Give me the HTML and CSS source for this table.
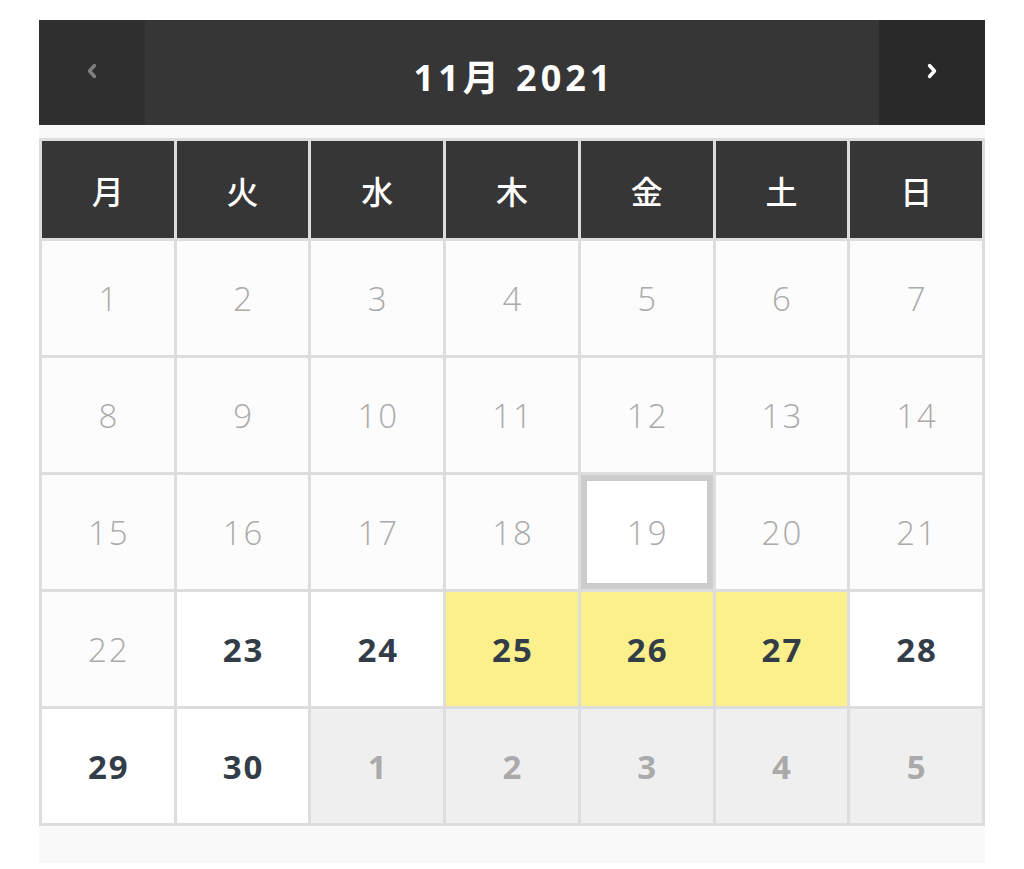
FILE: index.html
```html
<!DOCTYPE html>
<html lang="ja">
<head>
<meta charset="utf-8">
<link rel="stylesheet" href="styles.css">
</head>
<body>
<div class="cal">
  <div class="cal-head">
    <div class="nav nav-prev">
      <svg width="14" height="18" viewBox="0 0 14 18"><path d="M9.5 3.5 L4.5 9 L9.5 14.5" fill="none" stroke="#808080" stroke-width="3.4" stroke-linecap="round" stroke-linejoin="round"/></svg>
    </div>
    <div class="title">11月 2021</div>
    <div class="nav nav-next">
      <svg width="14" height="18" viewBox="0 0 14 18"><path d="M4.5 3.5 L9.5 9 L4.5 14.5" fill="none" stroke="#ffffff" stroke-width="3.4" stroke-linecap="round" stroke-linejoin="round"/></svg>
    </div>
  </div>
  <div class="cal-body">
    <div class="grid">
      <div class="wd">月</div><div class="wd">火</div><div class="wd">水</div><div class="wd">木</div><div class="wd">金</div><div class="wd">土</div><div class="wd">日</div>
      <div class="d past">1</div><div class="d past">2</div><div class="d past">3</div><div class="d past">4</div><div class="d past">5</div><div class="d past">6</div><div class="d past">7</div>
      <div class="d past">8</div><div class="d past">9</div><div class="d past">10</div><div class="d past">11</div><div class="d past">12</div><div class="d past">13</div><div class="d past">14</div>
      <div class="d past">15</div><div class="d past">16</div><div class="d past">17</div><div class="d past">18</div><div class="d past today">19</div><div class="d past">20</div><div class="d past">21</div>
      <div class="d past">22</div><div class="d open">23</div><div class="d open">24</div><div class="d open hl">25</div><div class="d open hl">26</div><div class="d open hl">27</div><div class="d open">28</div>
      <div class="d open">29</div><div class="d open">30</div><div class="d next">1</div><div class="d next">2</div><div class="d next">3</div><div class="d next">4</div><div class="d next">5</div>
    </div>
  </div>
</div>
</body>
</html>
```

FILE: styles.css
```css
html, body {
  margin: 0;
  padding: 0;
  background: #ffffff;
}
body {
  font-family: "Open Sans", "Noto Sans CJK JP", sans-serif;
}
.cal {
  width: 946px;
  margin: 20px 0 0 39px;
}
.cal-head {
  height: 105px;
  background: #363636;
  display: flex;
  align-items: stretch;
}
.nav {
  width: 106px;
  display: flex;
  align-items: center;
  justify-content: center;
  padding-bottom: 4px;
  box-sizing: border-box;
}
.nav-prev { background: #2f2f2f; }
.nav-next { background: #292929; }
.title {
  flex: 1;
  display: flex;
  align-items: center;
  justify-content: center;
  color: #ffffff;
  font-size: 36px;
  font-weight: 700;
  letter-spacing: 4px;
  padding-top: 6px;
  padding-left: 4px;
  box-sizing: border-box;
}
.cal-body {
  background: #f9f9f9;
  padding: 13px 0 37px 0;
}
.grid {
  display: grid;
  grid-template-columns: repeat(7, 1fr);
  grid-template-rows: 97px repeat(5, 114px);
  gap: 3px;
  padding: 3px;
  background: #dddddd;
}
.wd {
  background: #363636;
  color: #ffffff;
  font-family: "Noto Sans CJK JP", sans-serif;
  font-size: 32px;
  font-weight: 500;
  display: flex;
  align-items: center;
  justify-content: center;
}
.d {
  display: flex;
  align-items: center;
  justify-content: center;
  font-size: 33px;
  letter-spacing: 2px;
  padding-left: 2px;
  box-sizing: border-box;
}
.past {
  background: #fcfcfc;
  color: #aaaaaa;
  font-weight: 300;
}
.today {
  border: 6px solid #cccccc;
  background: #ffffff;
}
.open {
  background: #ffffff;
  color: #333d47;
  font-weight: 700;
}
.hl {
  background: #fcf08c;
}
.next {
  background: #efefef;
  color: #aaaaaa;
  font-weight: 700;
}
```
